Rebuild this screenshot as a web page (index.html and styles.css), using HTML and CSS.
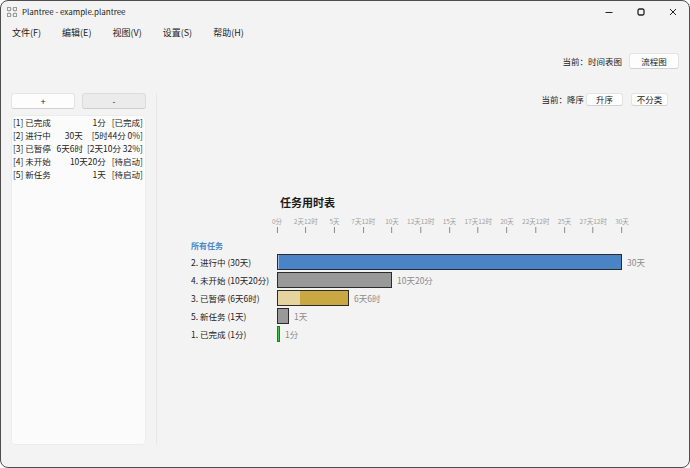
FILE: index.html
```html
<!DOCTYPE html>
<html lang="zh">
<head>
<meta charset="UTF-8">
<title>Plantree - example.plantree</title>
<link rel="stylesheet" href="styles.css">
</head>
<body>

<div class="window">
  <div class="titlebar">
    <svg class="app-icon" viewBox="0 0 10 10">
      <rect x="0.5" y="0.5" width="3" height="3" fill="none" stroke="#9a9a9a"/>
      <rect x="6.5" y="0.5" width="3" height="3" fill="none" stroke="#9a9a9a"/>
      <rect x="0.5" y="6.5" width="3" height="3" fill="none" stroke="#9a9a9a"/>
      <rect x="6.5" y="6.5" width="3" height="3" fill="none" stroke="#9a9a9a"/>
      <path d="M3.5 2h3M2 3.5v3M8 3.5v3M3.5 8h3" stroke="#bbb" stroke-width="0.8"/>
    </svg>
    <span class="title">Plantree - example.plantree</span>
    <div class="controls">
      <span class="ctl"><svg width="8" height="8"><path d="M0.5 4.5h7" stroke="#222"/></svg></span>
      <span class="ctl"><svg width="8" height="8"><rect x="1" y="1" width="6" height="6" rx="1.5" fill="none" stroke="#222" stroke-width="1.3"/></svg></span>
      <span class="ctl"><svg width="8" height="8"><path d="M1 1l6 6M7 1l-6 6" stroke="#222"/></svg></span>
    </div>
  </div>

  <ul class="menu">
    <li>文件(F)</li>
    <li>编辑(E)</li>
    <li>视图(V)</li>
    <li>设置(S)</li>
    <li>帮助(H)</li>
  </ul>

  <div class="toolbar">
    <span>当前：时间表图</span>
    <button class="btn btn-wide">流程图</button>
  </div>

  <div class="main">
    <div class="side">
      <div class="side-buttons">
        <button class="btn side-btn">+</button>
        <button class="btn side-btn side-btn-off">-</button>
      </div>
      <div class="task-list">
        <div class="task-row"><span class="task-name">[1] 已完成</span><span>1分</span><span class="task-state">[已完成]</span></div>
        <div class="task-row"><span class="task-name">[2] 进行中</span><span>30天</span><span class="task-state wide">[5时44分 0%]</span></div>
        <div class="task-row"><span class="task-name">[3] 已暂停</span><span>6天6时</span><span class="task-state narrow">[2天10分 32%]</span></div>
        <div class="task-row"><span class="task-name">[4] 未开始</span><span>10天20分</span><span class="task-state">[待启动]</span></div>
        <div class="task-row"><span class="task-name">[5] 新任务</span><span>1天</span><span class="task-state">[待启动]</span></div>
      </div>
    </div>

    <div class="content">
      <div class="sort-bar">
        <span>当前：降序</span>
        <button class="btn btn-small">升序</button>
        <button class="btn btn-small gap-left">不分类</button>
      </div>

      <div class="chart">
        <h2 class="chart-title">任务用时表</h2>
        <div class="axis">
          <span class="tick" style="left: 0px">0分</span>
          <span class="tick" style="left: 28.75px">2天12时</span>
          <span class="tick" style="left: 57.5px">5天</span>
          <span class="tick" style="left: 86.25px">7天12时</span>
          <span class="tick" style="left: 115px">10天</span>
          <span class="tick" style="left: 143.75px">12天12时</span>
          <span class="tick" style="left: 172.5px">15天</span>
          <span class="tick" style="left: 201.25px">17天12时</span>
          <span class="tick" style="left: 230px">20天</span>
          <span class="tick" style="left: 258.75px">22天12时</span>
          <span class="tick" style="left: 287.5px">25天</span>
          <span class="tick" style="left: 316.25px">27天12时</span>
          <span class="tick" style="left: 345px">30天</span>
        </div>

        <div class="group-name">所有任务</div>

        <div class="rows">
          <div class="bar-row">
            <span class="bar-label">2. 进行中 (30天)</span>
            <div class="bar bar-active" style="width: 345px"></div>
            <span class="bar-value">30天</span>
          </div>
          <div class="bar-row">
            <span class="bar-label">4. 未开始 (10天20分)</span>
            <div class="bar bar-idle" style="width: 115px"></div>
            <span class="bar-value">10天20分</span>
          </div>
          <div class="bar-row">
            <span class="bar-label">3. 已暂停 (6天6时)</span>
            <div class="bar bar-paused" style="width: 72px">
              <span class="seg-done" style="width: 32%"></span>
              <span class="seg-rest"></span>
            </div>
            <span class="bar-value">6天6时</span>
          </div>
          <div class="bar-row">
            <span class="bar-label">5. 新任务 (1天)</span>
            <div class="bar bar-idle" style="width: 12px"></div>
            <span class="bar-value">1天</span>
          </div>
          <div class="bar-row">
            <span class="bar-label">1. 已完成 (1分)</span>
            <div class="bar bar-done" style="width: 3px"></div>
            <span class="bar-value">1分</span>
          </div>
        </div>
      </div>
    </div>
  </div>
</div>

</body>
</html>
```

FILE: styles.css
```css
* {
  box-sizing: border-box;
}

body {
  margin: 0;
  padding: 0;
  background-color: #fff;
}

.window {
  width: 690px;
  height: 468px;
  display: flex;
  flex-direction: column;
  background-color: #f3f3f3;
  border: 1px solid #4d4d4d;
  border-radius: 8px;
  overflow: hidden;
  font-family: "Noto Sans CJK SC", "Noto Sans", sans-serif;
  color: #1b1b1b;
}

/* Title bar */
.titlebar {
  height: 21px;
  display: flex;
  align-items: center;
  padding-left: 6px;
  font-size: 8px;
}

.app-icon {
  width: 10px;
  height: 10px;
  margin-right: 5px;
}

.controls {
  margin-left: auto;
  align-self: stretch;
  display: flex;
}

.ctl {
  width: 32px;
  display: flex;
  align-items: center;
  justify-content: center;
}

/* Menu */
.menu {
  list-style-type: none;
  margin: 0;
  padding: 0 0 0 11px;
  height: 20px;
  display: flex;
  align-items: center;
  gap: 21px;
  font-size: 9px;
}

/* Buttons */
.btn {
  font-family: inherit;
  font-size: 8.5px;
  color: #1b1b1b;
  height: 16px;
  line-height: 14px;
  padding: 0;
  background-color: #fdfdfd;
  border: 1px solid #e4e4e4;
  border-bottom-color: #d2d2d2;
  border-radius: 3px;
}

.btn-wide {
  width: 50px;
}

.btn-small {
  width: 37px;
  height: 13px;
  line-height: 11px;
}

.gap-left {
  margin-left: 6px;
}

.toolbar {
  display: flex;
  justify-content: flex-end;
  align-items: center;
  gap: 7px;
  padding: 11px 10px 0 0;
  font-size: 8.5px;
}

/* Main area */
.main {
  flex: 1;
  display: flex;
  padding: 24px 0 22px 10px;
}

.side {
  width: 135px;
  display: flex;
  flex-direction: column;
  gap: 6px;
}

.side-buttons {
  display: flex;
  gap: 7px;
}

.side-btn {
  flex: 1;
}

.side-btn-off {
  background-color: #ebebeb;
  border-color: #dcdcdc;
  border-bottom-color: #cdcdcd;
}

.task-list {
  flex: 1;
  background-color: #fbfbfb;
  border: 1px solid #ececec;
  border-radius: 4px;
  padding: 0 2px 0 1px;
  font-size: 8.5px;
  line-height: 13px;
}

.task-row {
  display: flex;
  white-space: nowrap;
}

.task-name {
  flex: 1;
}

.task-state {
  margin-left: 6px;
}

.task-state.wide {
  margin-left: 9px;
}

.task-state.narrow {
  margin-left: 4px;
}

.content {
  flex: 1;
  margin-left: 10px;
  border-left: 1px solid #e7e7e7;
}

.sort-bar {
  display: flex;
  justify-content: flex-end;
  align-items: center;
  gap: 2px;
  padding-right: 21px;
  font-size: 8.5px;
  line-height: 13px;
}

/* Chart */
.chart {
  margin: 89px 0 0 34px;
}

.chart-title {
  margin: 0 0 0 89px;
  font-size: 11px;
  line-height: 14px;
  font-weight: bold;
}

.axis {
  position: relative;
  width: 345px;
  height: 18px;
  margin: 8px 0 0 86px;
}

.tick {
  position: absolute;
  top: 0;
  transform: translateX(-50%);
  display: flex;
  flex-direction: column;
  align-items: center;
  font-size: 6.5px;
  line-height: 8px;
  color: #a0a0a0;
  white-space: nowrap;
}

.tick::after {
  content: "";
  width: 1px;
  height: 6px;
  margin-top: 2px;
  background-color: #8a8a8a;
}

.group-name {
  margin-top: 6px;
  font-size: 8px;
  line-height: 10px;
  font-weight: bold;
  color: #4a86c8;
}

.rows {
  margin-top: 3px;
}

.bar-row {
  height: 18px;
  display: flex;
  align-items: flex-start;
  font-size: 8.5px;
  line-height: 17px;
}

.bar-label {
  width: 86px;
  white-space: nowrap;
}

.bar {
  height: 16px;
  display: flex;
  border: 1px solid #2b2b2b;
}

.bar-value {
  margin-left: 5px;
  color: #8a8a8a;
}

.bar-active {
  background-color: #4a84c7;
  box-shadow: inset 1px 0 0 #9cc0ea;
}

.bar-idle {
  background-color: #999;
}

.seg-done {
  background-color: #e6d49e;
}

.seg-rest {
  flex: 1;
  background-color: #c9a843;
}

.bar-done {
  background-color: #3cc43c;
  border-color: #1f7f1f;
}
```
